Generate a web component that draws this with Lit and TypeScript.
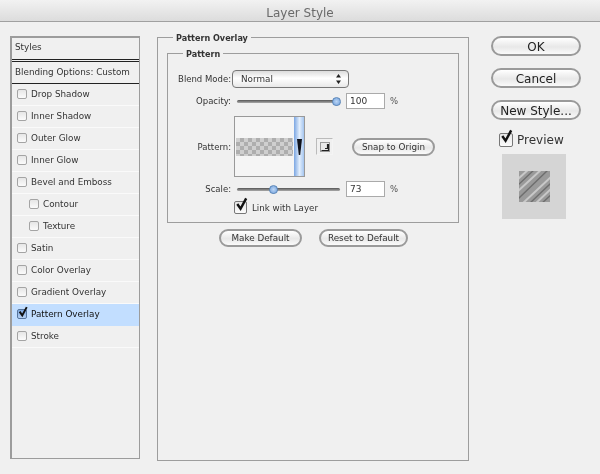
import { LitElement, html, css, svg } from "lit";
import { customElement } from "lit/decorators.js";

const check = svg`<svg class="tick" viewBox="0 0 16 16"><path d="M3.5 7.5 L7 12.5 L13 1.5" fill="none" stroke="#111" stroke-width="2.6"/></svg>`;

const effects: { label: string; sub?: boolean; checked?: boolean; selected?: boolean }[] = [
  { label: "Drop Shadow" },
  { label: "Inner Shadow" },
  { label: "Outer Glow" },
  { label: "Inner Glow" },
  { label: "Bevel and Emboss" },
  { label: "Contour", sub: true },
  { label: "Texture", sub: true },
  { label: "Satin" },
  { label: "Color Overlay" },
  { label: "Gradient Overlay" },
  { label: "Pattern Overlay", checked: true, selected: true },
  { label: "Stroke" },
];

@customElement("app-root")
export class AppRoot extends LitElement {
  static styles = css`
    :host {
      display: block;
      width: 600px;
      height: 474px;
      overflow: hidden;
      background: #f0f0f0;
      font-family: "DejaVu Sans", sans-serif;
      font-size: 8.8px;
      color: #333;
    }
    .window { filter: blur(0.4px); height: 474px; }
    .title {
      height: 22px;
      box-sizing: border-box;
      padding-top: 3px;
      background: linear-gradient(#f2f2f2, #dcdcdc);
      border-bottom: 1px solid #a0a0a0;
      text-align: center;
      font-size: 12px;
      line-height: 20px;
      color: #6a6a6a;
    }
    .main { display: flex; align-items: flex-start; padding: 8px 0 0 10px; }
    .styles {
      margin-top: 6px;
      width: 130px;
      height: 423px;
      box-sizing: border-box;
      border: 1px solid #9c9c9c;
      border-width: 2px 1px 1px 2px;
      flex: none;
    }
    .head { height: 21px; line-height: 19px; padding-left: 3px; white-space: nowrap; font-size: 8.8px; border-bottom: 1px solid #222; }
    .head + .head { border-top: 1px solid #222; margin-top: 1px; height: 21px; line-height: 21px; }
    .row {
      box-sizing: border-box;
      height: 22px;
      padding-bottom: 2px;
      border-bottom: 1px solid #fafafa;
      display: flex;
      align-items: center;
      gap: 4px;
      padding-left: 5px;
      font-size: 8.8px;
      white-space: nowrap;
    }
    .row.sub { padding-left: 17px; }
    .row.selected { background: #c2deff; color: #111; border-bottom-color: #c2deff; font-weight: 500; }
    .box {
      position: relative;
      flex: none;
      width: 8px;
      height: 8px;
      border: 1px solid #a4a4a4;
      border-radius: 2px;
      background: linear-gradient(#e6e6e6, #fbfbfb);
    }
    .box.on { border-color: #777; }
    .selected .box { background: linear-gradient(#7fa9e0, #b5d0f2); border-color: #56759e; }
    .tick { position: absolute; left: -1px; top: -4px; width: 12px; height: 12px; }
    fieldset { margin: 0; min-width: 0; border: 1px solid #9d9d9d; box-sizing: border-box; }
    legend { font-weight: bold; font-size: 8.1px; line-height: 12px; padding: 2px 3px 0; color: #333; }
    .outer { margin-left: 17px; width: 312px; height: 431px; flex: none; padding: 2px 9px 0; }
    .outer > legend { margin-left: 6px; }
    .inner { width: 292px; height: 177px; padding: 0; }
    .inner > legend { margin-left: 15px; }
    .line { display: flex; align-items: center; }
    .lab { width: 63px; flex: none; text-align: right; color: #333; font-size: 8.5px; }
    .blend { margin-top: 10px; height: 18px; }
    .select {
      margin-left: 1px;
      width: 117px;
      height: 18px;
      box-sizing: border-box;
      border: 1px solid #777;
      border-radius: 4px;
      background: linear-gradient(#dcdcdc, #fff 45%, #e8e8e8);
      display: flex;
      align-items: center;
      justify-content: space-between;
      padding: 0 6px 0 8px;
      color: #333;
    }
    .slider { position: relative; margin-left: 6px; width: 103px; height: 3px; border-radius: 2px; background: linear-gradient(#555, #aaa); flex: none; }
    .thumb {
      position: absolute;
      top: -3px;
      width: 9px;
      height: 9px;
      border-radius: 50% 50% 45% 45%;
      border: 1px solid #5b86b8;
      box-sizing: border-box;
      background: radial-gradient(#bcd6f5, #6f9fdb);
    }
    .num {
      margin-left: 6px;
      width: 39px;
      height: 16px;
      box-sizing: border-box;
      border: 1px solid #aaa;
      background: #fff;
      padding-left: 3px;
      line-height: 15px;
      font-size: 9px;
    }
    .pct { margin-left: 5px; font-size: 8.5px; color: #555; }
    .op { margin-top: 5px; }
    .pat { margin-top: 7px; height: 61px; }
    .picker {
      margin-left: 3px;
      flex: none;
      width: 71px;
      height: 61px;
      box-sizing: border-box;
      border: 1px solid #999;
      background: #f5f5f5;
      display: flex;
      align-items: center;
    }
    .swatch {
      margin-left: 1px;
      width: 57px;
      height: 18px;
      background-color: #c6c6c6;
      background-image: conic-gradient(#aeaeae 25%, #cfcfcf 0 50%, #aeaeae 0 75%, #cfcfcf 0);
      background-size: 8px 8px;
    }
    .scroll {
      margin-left: auto;
      position: relative;
      width: 10px;
      height: 100%;
      background: linear-gradient(90deg, #7ba6e2, #e2eefc 55%, #a4c5f0);
      display: flex;
      align-items: center;
      justify-content: center;
    }
    .mini {
      margin-left: 11px;
      width: 17px;
      height: 17px;
      box-sizing: border-box;
      border: 1px solid #bbb;
      border-right-color: #f4f4f4;
      border-bottom-color: #f4f4f4;
      display: flex;
      align-items: center;
      justify-content: center;
    }
    .btn {
      box-sizing: border-box;
      display: flex;
      align-items: center;
      justify-content: center;
      border: 2px solid #9a9a9a;
      border-radius: 10px;
      background: linear-gradient(#fff, #e8e8e8 55%, #fafafa);
      color: #333;
      white-space: nowrap;
    }
    .snap { margin-left: 19px; width: 83px; height: 18px; font-size: 8.8px; }
    .sc { margin-top: 4px; height: 16px; }
    .link { margin: 4px 0 0 66px; gap: 5px; font-size: 8.7px; }
    .link .box { width: 11px; height: 11px; }
    .link .tick, .prev .tick { left: -1px; top: -5px; width: 15px; height: 15px; }
    .defaults { display: flex; margin: 6px 0 0 52px; gap: 17px; }
    .defaults .btn { height: 18px; font-size: 8.8px; }
    .right { margin: 6px 0 0 22px; width: 90px; flex: none; display: flex; flex-direction: column; font-size: 12px; }
    .right .btn { height: 20px; padding-top: 1px; margin-bottom: 12px; color: #222; font-size: 12px; }
    .prev { display: flex; align-items: center; gap: 4px; padding-left: 8px; height: 16px; color: #333; }
    .prev .box { width: 12px; height: 12px; }
    .thumbbox {
      margin: 6px 0 0 11px;
      width: 64px;
      height: 65px;
      background: #d5d5d5;
      display: flex;
      align-items: center;
      justify-content: center;
    }
  `;

  private box(on = false) {
    return html`<span class="box ${on ? "on" : ""}">${on ? check : ""}</span>`;
  }

  render() {
    return html`
      <div class="window">
        <div class="title">Layer Style</div>
        <div class="main">
          <div class="styles">
            <div class="head">Styles</div>
            <div class="head">Blending Options: Custom</div>
            ${effects.map(
              (e) => html`<div class="row ${e.sub ? "sub" : ""} ${e.selected ? "selected" : ""}">
                ${this.box(e.checked)}<span>${e.label}</span>
              </div>`
            )}
          </div>
          <fieldset class="outer">
            <legend>Pattern Overlay</legend>
            <fieldset class="inner">
              <legend>Pattern</legend>
              <div class="line blend">
                <span class="lab">Blend Mode:</span>
                <div class="select">
                  <span>Normal</span>
                  <svg width="7" height="12" viewBox="0 0 7 12"><path d="M3.5 1 L6 4.5 H1 Z M3.5 11 L1 7.5 H6 Z" fill="#222"/></svg>
                </div>
              </div>
              <div class="line op">
                <span class="lab">Opacity:</span>
                <div class="slider"><span class="thumb" style="left:95px"></span></div>
                <div class="num">100</div><span class="pct">%</span>
              </div>
              <div class="line pat">
                <span class="lab">Pattern:</span>
                <div class="picker">
                  <div class="swatch"></div>
                  <div class="scroll">
                    <svg width="5" height="16" viewBox="0 0 5 16"><path d="M0 0 H5 L3.2 16 H1.8 Z" fill="#10131c"/></svg>
                  </div>
                </div>
                <div class="mini">
                  <svg width="10" height="10" viewBox="0 0 10 10"><rect x="0.5" y="0.5" width="9" height="9" fill="#e9e9e9" stroke="#999"/><path d="M5 6.5 H7.5 V2 M1.5 8.5 H8.5 V2" fill="none" stroke="#222" stroke-width="1.2"/></svg>
                </div>
                <div class="btn snap">Snap to Origin</div>
              </div>
              <div class="line sc">
                <span class="lab">Scale:</span>
                <div class="slider"><span class="thumb" style="left:32px"></span></div>
                <div class="num">73</div><span class="pct">%</span>
              </div>
              <div class="line link">${this.box(true)}<span>Link with Layer</span></div>
            </fieldset>
            <div class="defaults">
              <div class="btn" style="width:83px">Make Default</div>
              <div class="btn" style="width:89px">Reset to Default</div>
            </div>
          </fieldset>
          <div class="right">
            <div class="btn">OK</div>
            <div class="btn">Cancel</div>
            <div class="btn">New Style...</div>
            <div class="prev">${this.box(true)}<span>Preview</span></div>
            <div class="thumbbox">
              <svg width="31" height="31" viewBox="0 0 31 31">
                <rect width="31" height="31" fill="#9a9a9a"/>
                <path d="M-2 9 L10 -2 M-2 21 L24 -3 M3 33 L33 5 M16 33 L33 17" stroke="#c8c8c8" stroke-width="2" fill="none"/>
                <path d="M-2 15 L17 -3 M-2 29 L30 -2 M10 33 L33 11 M22 33 L33 23" stroke="#6e6e6e" stroke-width="1.4" fill="none"/>
              </svg>
            </div>
          </div>
        </div>
      </div>
    `;
  }
}
